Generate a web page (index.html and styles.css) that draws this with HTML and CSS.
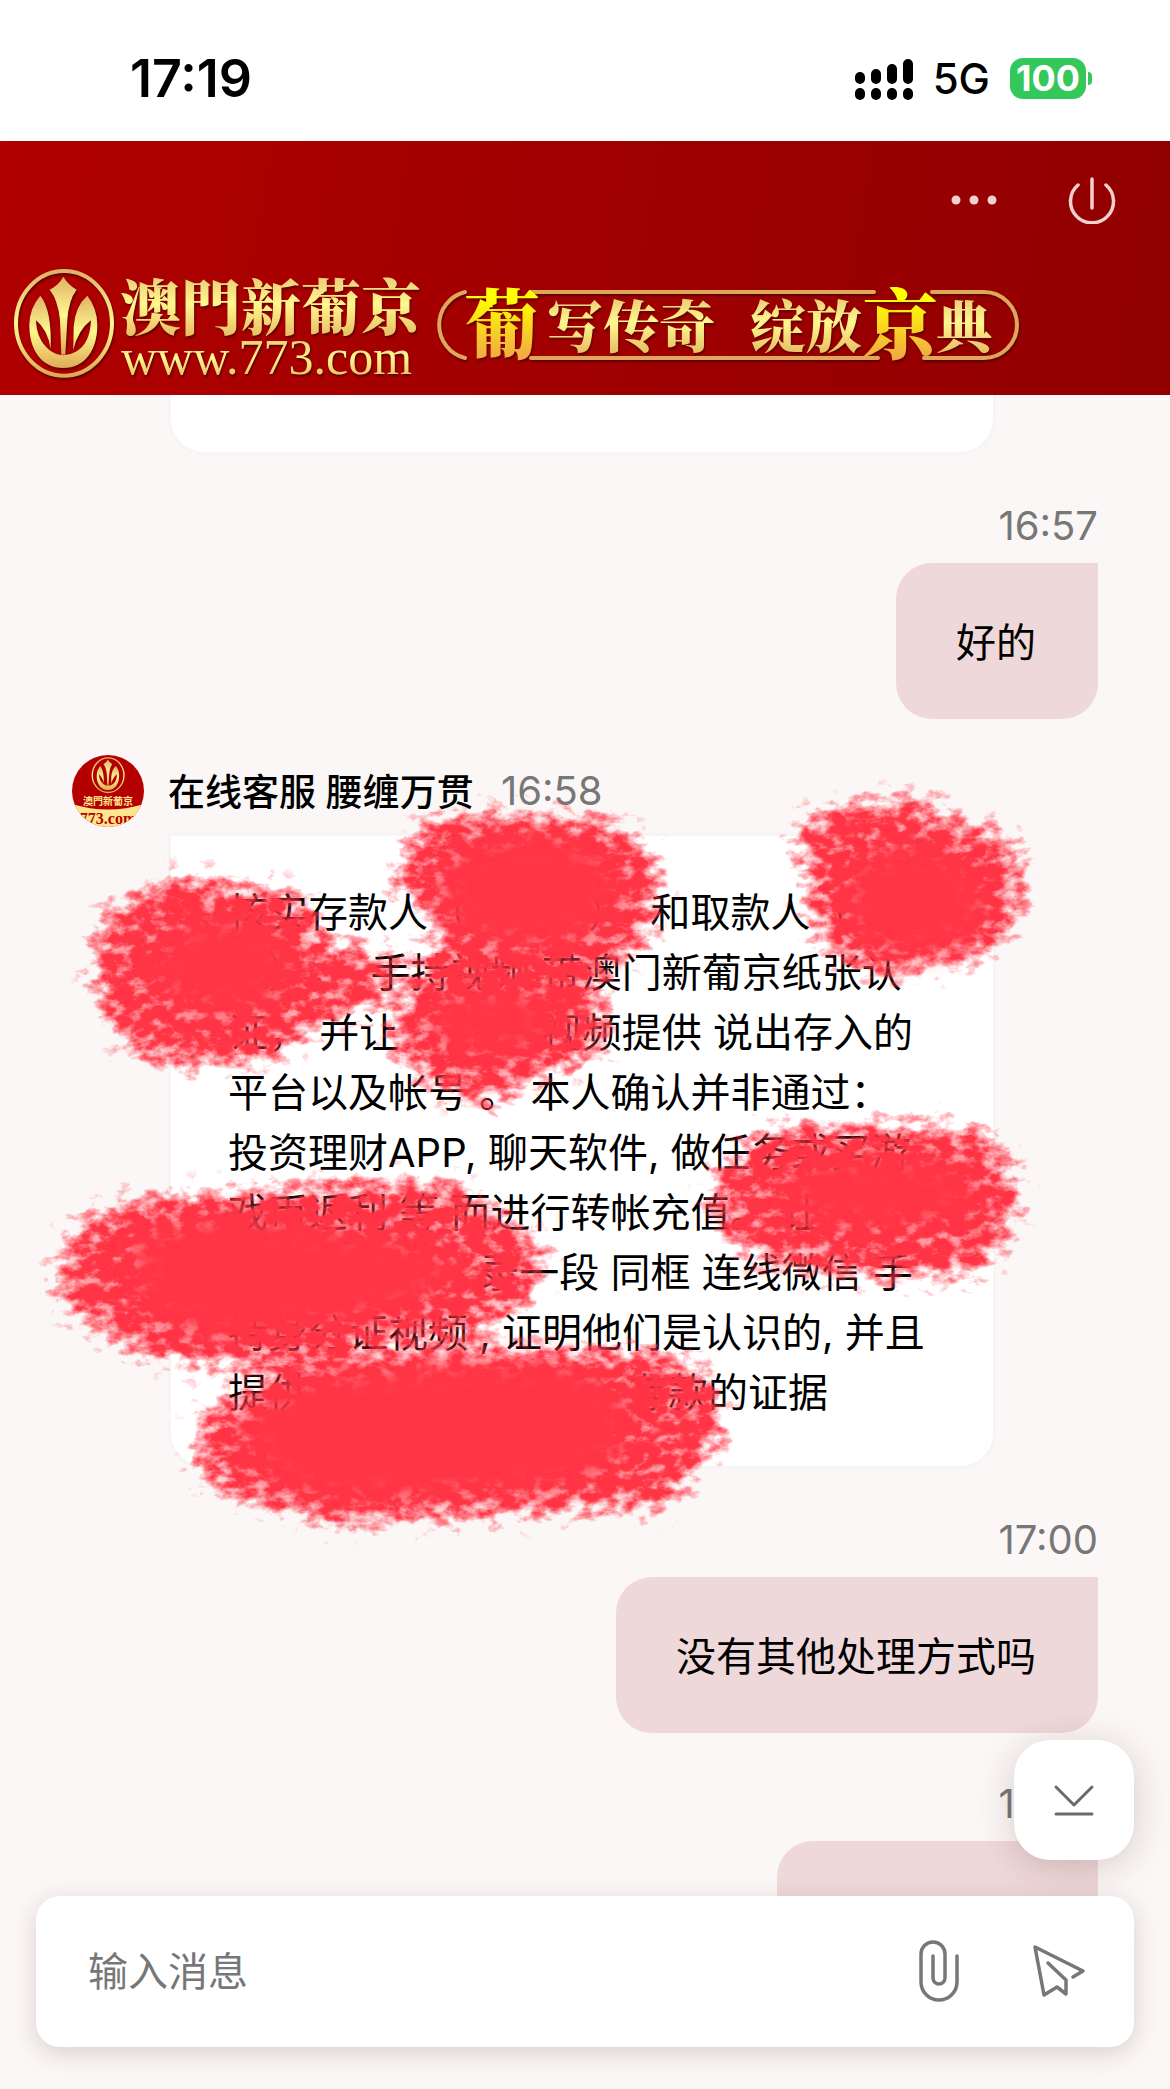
FILE: index.html
```html
<!DOCTYPE html>
<html lang="zh-CN">
<head>
<meta charset="utf-8">
<meta name="viewport" content="width=device-width, initial-scale=1">
<title>在线客服</title>
<link rel="stylesheet" href="styles.css">
</head>
<body>
<div class="status">
  <span class="clock">17:19</span>
  <div class="status-right">
    <svg class="signal" viewBox="0 0 58 42" aria-hidden="true"><g stroke="#000" stroke-width="10" stroke-linecap="round"><path d="M5 19v2M21 16v5M37 11v10M53 6v15M5 35v2M21 35v2M37 35v2M53 35v2"/></g></svg>
    <span class="network">5G</span>
    <span class="battery">100</span>
  </div>
</div>

<header class="header">
  <div class="actions">
    <button class="icon-btn" aria-label="更多"><svg width="48" height="48" viewBox="0 0 48 48"><g fill="#f3cfcf"><circle cx="6" cy="24" r="4.5"/><circle cx="24" cy="24" r="4.5"/><circle cx="42" cy="24" r="4.5"/></g></svg></button>
    <button class="icon-btn" aria-label="结束"><svg width="48" height="48" viewBox="0 0 48 48" fill="none" stroke="#f3cfcf" stroke-width="3.5" stroke-linecap="round"><path d="M24 3v29M10 9a21.500 21.500 0 1 0 28 0"/></svg></button>
  </div>
  <svg class="banner" viewBox="0 0 1170 145" role="img" aria-label="澳門新葡京">
    <defs>
      <linearGradient id="gold" x1="0" y1="0" x2="0" y2="1"><stop offset="0" stop-color="#dfb368"/><stop offset=".5" stop-color="#fff88e"/><stop offset="1" stop-color="#dfa956"/></linearGradient>
      <linearGradient id="sun" x1="0" y1="0" x2="0" y2="1"><stop offset=".3" stop-color="#ffff00"/><stop offset=".9" stop-color="#f0a04c"/></linearGradient>
      <g id="emblem">
        <ellipse cx="192" cy="220" rx="144" ry="157" fill="none" stroke="url(#gold)" stroke-width="12"/>
        <path fill="url(#gold)" d="M190 80Q206 106 230 119Q206 150 202 210L196 314H184L180 210Q174 150 149 119Q176 106 190 80Z"/>
        <path fill="url(#gold)" d="M121 137Q88 175 88 225C88 300 124 354 190 354S292 300 292 225Q292 175 262 137Q226 168 221 230L220 300Q234 240 273 211Q270 284 226 306Q208 316 190 316Q166 314 148 300Q110 270 108 211Q142 238 152 296Q156 180 121 137Z"/>
      </g>
    </defs>
    <g class="raised">
      <use href="#emblem" transform="scale(.3333)"/>
      <text class="brand" x="121" y="80" fill="url(#gold)">澳門新葡京</text>
      <text class="site" x="121" y="124" fill="url(#gold)">www.773.com</text>
      <path d="M465 108A34 34 0 0 1 465 42M531 42H874M932 42H984a33 33 0 0 1 0 66H924M878 108H531" fill="none" stroke="#dfa65c" stroke-width="4" stroke-linecap="round"/>
      <text class="big" x="464" y="103" fill="url(#sun)">葡</text>
      <text class="slogan" x="547" y="97" fill="url(#gold)">写传奇</text>
      <text class="slogan" x="750" y="97" fill="url(#gold)">绽放</text>
      <text class="big" x="862" y="103" fill="url(#sun)">京</text>
      <text class="slogan" x="936" y="97" fill="url(#gold)">典</text>
    </g>
  </svg>
</header>

<main class="chat">
  <div class="bubble agent tail"></div>

  <article class="msg mine">
    <time>16:57</time>
    <p class="bubble user">好的</p>
  </article>

  <article class="msg theirs">
    <div class="sender">
      <svg class="avatar" viewBox="0 0 72 72" aria-hidden="true">
        <clipPath id="round"><circle cx="36" cy="36" r="36"/></clipPath>
        <g clip-path="url(#round)">
          <rect width="72" height="72" fill="#b40000"/>
          <use href="#emblem" transform="translate(15 -4) scale(.11)"/>
          <text class="avatar-brand" x="36" y="50">澳門新葡京</text>
          <path d="M0 49Q36 60 72 49V72H0Z" fill="#ffe68c"/>
          <text class="avatar-site" x="36" y="69">773.com</text>
        </g>
      </svg>
      <h2>在线客服 腰缠万贯</h2>
      <time>16:58</time>
    </div>
    <p class="bubble agent">核实存款人（<span class="blank name"></span>）&nbsp; 和取款人（<br>
      <span class="blank char"></span>），&nbsp; 手持视频 带澳门新葡京纸张认<br>
      证， 并让 <span class="blank name"></span> 视频提供 说出存入的<br>
      平台以及帐号 。 本人确认并非通过：<br>
      投资理财APP, 聊天软件, 做任务或买游<br>
      戏币返利 等 而进行转帐充值。 让<br>
      <span class="blank char"></span>以及<span class="blank name"></span> 录一段 同框 连线微信 手<br>
      持身分证视频 , 证明他们是认识的, 并且<br>
      提供<span class="blank long"></span>存款的证据</p>
    <svg class="scribble" viewBox="0 755 1170 790" aria-hidden="true">
      <filter id="crayon" filterUnits="userSpaceOnUse" x="0" y="755" width="1170" height="820" color-interpolation-filters="sRGB">
        <feGaussianBlur in="SourceGraphic" stdDeviation="15" result="soft"/>
        <feTurbulence type="fractalNoise" baseFrequency=".06 .09" numOctaves="5" seed="8"/>
        <feColorMatrix values="0 0 0 0 0  0 0 0 0 0  0 0 0 0 0  2 0 0 0 -.5" result="grain"/>
        <feComposite in="soft" in2="grain" operator="arithmetic" k2=".6" k3=".4"/>
        <feColorMatrix values="0 0 0 0 1  0 0 0 0 .204  0 0 0 0 .271  0 0 0 2.800 -1.2"/>
      </filter>
      <filter id="core" filterUnits="userSpaceOnUse" x="0" y="755" width="1170" height="820"><feGaussianBlur stdDeviation="12"/></filter>
      <g filter="url(#crayon)" fill="#ff3445">
        <path d="M102 910 165 875H197L283 887 310 900 326 940 400 950 383 1007 319 1027 268 1067 179 1070 130 1057 100 1013 88 967Z"/>
        <path d="M390 890 401 847 426 817 486 810 620 817 637 840 667 867 660 893 650 947 600 975 610 1040 590 1068 540 1075 500 1110 440 1095 385 1050 395 1010 426 945 440 925Z"/>
        <path d="M840 800 937 797 953 820 1010 830 1030 883 1010 940 973 963 877 980 827 957 803 913 803 863 788 842 803 818Z"/>
        <path d="M760 1123H960L1007 1143 1023 1203 993 1270 953 1282 820 1277 727 1253 703 1177 737 1157Z"/>
        <path d="M129 1195 290 1187 336 1178H443L486 1200 554 1250 529 1307 479 1333 390 1338 347 1350 268 1370 190 1367 129 1353 58 1307 54 1287 61 1233Z"/>
        <path d="M233 1397 194 1410V1467L204 1490 333 1527 586 1513 677 1510 690 1473 723 1453 725 1407 703 1363 660 1347H433L300 1360 268 1383Z"/>
      </g>
      <g filter="url(#core)" fill="#ff3445">
        <ellipse cx="225" cy="965" rx="68" ry="46"/>
        <ellipse cx="530" cy="890" rx="88" ry="54"/>
        <ellipse cx="495" cy="1022" rx="64" ry="30"/>
        <ellipse cx="915" cy="900" rx="68" ry="52"/>
        <ellipse cx="880" cy="1192" rx="96" ry="34"/>
        <path d="M130 1240 230 1216 400 1240 470 1270 400 1310 230 1340 150 1310Z"/>
        <path d="M240 1420 310 1380 430 1364 570 1364 630 1400 620 1460 560 1484 340 1500 270 1480Z"/>
      </g>
    </svg>
  </article>

  <article class="msg mine">
    <time>17:00</time>
    <p class="bubble user">没有其他处理方式吗</p>
  </article>

  <article class="msg mine">
    <time>17:00</time>
    <p class="bubble user short"></p>
  </article>
</main>

<footer class="footer">
  <button class="to-bottom" aria-label="回到底部"><svg width="48" height="48" viewBox="0 0 48 48" fill="none" stroke="#6a6a6a" stroke-width="3" stroke-linecap="round" stroke-linejoin="round"><path d="M6 11 24 29 42 11M6 38H42"/></svg></button>
  <form class="composer">
    <input type="text" placeholder="输入消息" aria-label="输入消息">
    <button type="button" class="icon-btn" aria-label="附件"><svg width="60" height="64" viewBox="0 0 60 64" fill="none" stroke="#777" stroke-width="3.500" stroke-linecap="round"><path d="M47 16V42A18 18 0 0 1 11 42V14A12 12 0 0 1 35 14V38A6 6 0 0 1 23 38V16"/></svg></button>
    <button type="submit" class="icon-btn" aria-label="发送"><svg width="60" height="64" viewBox="0 0 60 64" fill="none" stroke="#777" stroke-width="3.500" stroke-linecap="round" stroke-linejoin="round"><path d="M43 37 53 31 5 7 14 55 27 47 36 54V40L18 23"/></svg></button>
  </form>
</footer>
</body>
</html>
```
FILE: styles.css
```css
* { box-sizing: border-box; }

body {
  margin: 0;
  height: 100vh;
  display: flex;
  flex-direction: column;
  background: #fbf7f6;
  color: #000;
  font: 40px/60px Inter, "Noto Sans CJK SC", sans-serif;
  text-spacing-trim: space-all;
}

p, h2 { margin: 0; }

button {
  border: 0;
  padding: 0;
  background: none;
}

.icon-btn { display: flex; }

.status {
  flex: none;
  height: 141px;
  padding: 16px 84px 0 130px;
  display: flex;
  align-items: center;
  justify-content: space-between;
  background: #fff;
}

.clock {
  font-size: 52px;
  font-weight: 600;
}

.status-right {
  display: flex;
  align-items: center;
}

.signal { width: 58px; height: 42px; }

.network {
  margin: 0 20px;
  font-size: 42px;
  font-weight: 500;
}

.battery {
  position: relative;
  width: 76px;
  border-radius: 13px;
  background: #34c759;
  color: #fff;
  font-size: 36px;
  font-weight: 700;
  line-height: 41px;
  text-align: center;
}

.battery::after {
  content: "";
  position: absolute;
  left: 78px;
  top: 14px;
  width: 4px;
  height: 13px;
  border-radius: 0 4px 4px 0;
  background: #34c759;
}

.header {
  flex: none;
  background: linear-gradient(100deg, #b00000, #a00000 50%, #900000);
}

.actions {
  display: flex;
  justify-content: flex-end;
  gap: 70px;
  padding: 35px 54px 26px;
}

.banner { display: block; width: 100%; }
.raised { filter: drop-shadow(1px 2px 1px #600000); }

.brand, .slogan, .big {
  font-family: "Noto Serif CJK SC", "Noto Sans CJK TC", sans-serif;
  font-weight: 900;
}

.brand { font-size: 60px; }
.slogan { font-size: 56px; font-family: "Noto Serif CJK SC", "Noto Sans CJK SC", sans-serif; }
.big { font-size: 76px; }

.site {
  font-family: "Liberation Serif", serif;
  font-size: 50px;
}

.chat {
  flex: 1;
  min-height: 0;
  overflow: hidden;
  padding: 0 72px;
}

time { color: #777; line-height: 58px; }

.bubble { border-radius: 36px; }

.agent {
  margin: 0 102px 0 96px;
  padding: 47px 57px 43px;
  border: 3px solid #f6f4f4;
  border-top-left-radius: 0;
  background: #fff;
  white-space: nowrap;
}

.tail {
  height: 60px;
  padding: 0;
  border-top: 0;
  border-top-right-radius: 0;
}

.mine {
  display: flex;
  flex-direction: column;
  align-items: flex-end;
  gap: 8px;
  margin-top: 42px;
}

.user {
  padding: 50px 62px 46px 60px;
  border-top-right-radius: 0;
  background: #efd8d9;
}

.short { width: 321px; height: 156px; }

.theirs {
  position: relative;
  margin-top: 36px;
}

.sender {
  display: flex;
  align-items: center;
  height: 72px;
  margin-bottom: 6px;
}

.avatar { width: 72px; height: 72px; }

.avatar-brand {
  font: 700 10px "Noto Sans CJK TC", sans-serif;
  fill: #ffe68c;
  text-anchor: middle;
}

.avatar-site {
  font: 700 16px "Liberation Serif", serif;
  fill: #b40000;
  text-anchor: middle;
}

h2 {
  margin: 0 27px 0 24px;
  padding-top: 3px;
  font-size: 37px;
  font-weight: 500;
}

.blank { display: inline-block; }
.char { width: 40px; }
.name { width: 120px; }
.long { width: 320px; }

.scribble {
  position: absolute;
  left: -72px;
  top: 0;
  width: 1170px;
  overflow: visible;
  pointer-events: none;
}

.footer {
  position: relative;
  flex: none;
  padding: 0 36px 42px;
}

.composer {
  display: flex;
  align-items: center;
  gap: 60px;
  height: 151px;
  padding: 0 44px 0 52px;
  border-radius: 24px;
  background: #fff;
  box-shadow: 0 6px 24px rgba(60, 30, 30, .18);
}

.composer input {
  flex: 1;
  min-width: 0;
  border: 0;
  padding: 0;
  outline: 0;
  background: none;
  font: inherit;
}

.composer input::placeholder { color: #777; opacity: 1; }

.to-bottom {
  position: absolute;
  right: 36px;
  bottom: calc(100% + 36px);
  width: 120px;
  height: 120px;
  display: flex;
  align-items: center;
  justify-content: center;
  border-radius: 36px;
  background: #fff;
  box-shadow: 0 6px 36px rgba(60, 30, 30, .2);
}
```
